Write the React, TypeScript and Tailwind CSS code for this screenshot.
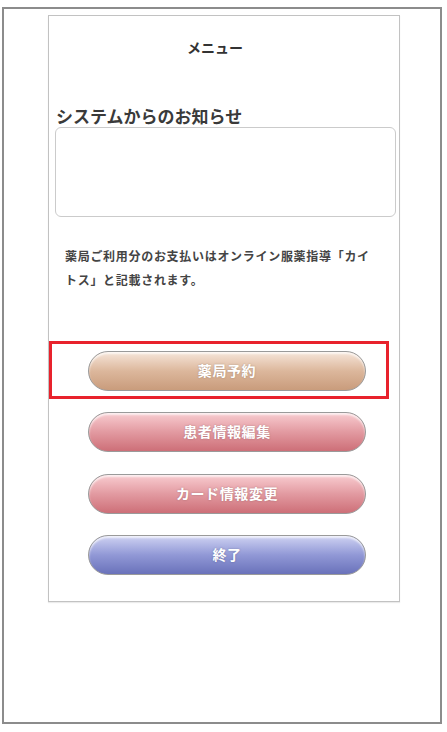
const font = { fontFamily: '"Noto Sans CJK JP", "Noto Sans", sans-serif' };

const MenuButton = ({ label, gradient, className = "" }: { label: string; gradient: string; className?: string }) => (
  <button
    className={`flex h-[40px] w-[278px] items-center justify-center rounded-full border-[1.5px] border-[#9a9a9a] pb-[1px] text-[14px] font-bold tracking-[0.6px] text-white [text-shadow:0_0_2px_rgba(0,0,0,0.25)] shadow-[inset_0_2px_2px_rgba(255,255,255,0.7)] ${gradient} ${className}`}
  >
    {label}
  </button>
);

export default function App() {
  return (
    <div className="min-h-screen bg-white pt-[7px] pl-[2px]" style={font}>
      <div className="h-[717px] w-[440px] border-2 border-[#8c8c8c] pt-[6px] pl-[44px]">
        <div className="h-[587px] w-[352px] border border-[#c2c2c2] shadow-[0_1px_1px_rgba(0,0,0,0.08)]">
          <h1 className="mt-[21px] pr-[18px] text-center text-[14px] font-bold leading-[21px] text-[#333]">
            メニュー
          </h1>

          <h2 className="mt-[47px] pl-[7px] text-[17px] font-bold leading-[22px] text-[#3a3a3a]">
            システムからのお知らせ
          </h2>
          <div className="ml-[6px] h-[90px] w-[341px] rounded-md border border-[#cbcbcb] bg-white" />

          <p className="mt-[27px] ml-[16px] text-[12px] font-bold leading-[24px] tracking-[0.7px] text-[#444]">
            薬局ご利用分のお支払いはオンライン服薬指導「カイ
            <br />
            トス」と記載されます。
          </p>

          {/* selected item */}
          <div className="mt-[49px] h-[58px] w-[340px] border-[3px] border-[#e8222c] pt-[7px] pl-[36px]">
            <MenuButton label="薬局予約" gradient="bg-linear-to-b from-[#f6e6da] via-[#dcb79c] to-[#c99c7c]" />
          </div>

          <div className="ml-[39px] flex flex-col">
            <MenuButton label="患者情報編集" gradient="bg-linear-to-b from-[#f8ccd0] via-[#e29aa1] to-[#cd6f78]" className="mt-[13px]" />
            <MenuButton label="カード情報変更" gradient="bg-linear-to-b from-[#f8ccd0] via-[#e29aa1] to-[#cd6f78]" className="mt-[22px]" />
            <MenuButton label="終了" gradient="bg-linear-to-b from-[#cfd2f2] via-[#9198d6] to-[#6a72ba]" className="mt-[21px]" />
          </div>
        </div>
      </div>
    </div>
  );
}
